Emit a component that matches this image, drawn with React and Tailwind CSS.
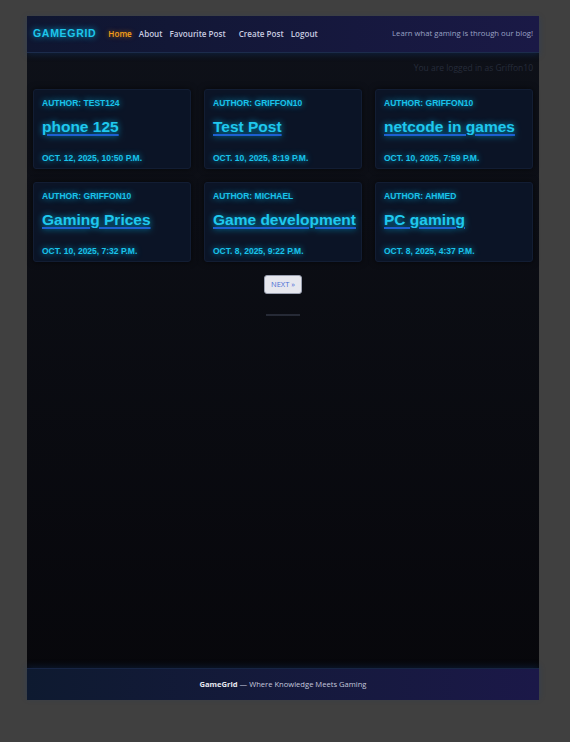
const posts = [
  { author: "test124", title: "phone 125", date: "Oct. 12, 2025, 10:50 p.m." },
  { author: "Griffon10", title: "Test Post", date: "Oct. 10, 2025, 8:19 p.m." },
  { author: "Griffon10", title: "netcode in games", date: "Oct. 10, 2025, 7:59 p.m." },
  { author: "Griffon10", title: "Gaming Prices", date: "Oct. 10, 2025, 7:32 p.m." },
  { author: "Michael", title: "Game development", date: "Oct. 8, 2025, 9:22 p.m." },
  { author: "Ahmed", title: "PC gaming", date: "Oct. 8, 2025, 4:37 p.m." },
];

const glow = "[text-shadow:0_0_6px_rgba(0,200,255,0.75)]";

const PostCard = ({ post }) => (
  <div className="h-[80px] rounded-[3px] border border-[#121d33] bg-[#0b1426] px-2 pt-[9px] shadow-[0_0_6px_rgba(0,0,0,0.6)]">
    <p className={`text-[8.5px] font-bold uppercase leading-none text-[#19c3ea] ${glow}`}>
      Author: {post.author}
    </p>
    <a
      href="#"
      className={`mt-[12px] block whitespace-nowrap text-[15.5px] font-bold leading-none text-[#1fc8ee] underline decoration-[#1d5fd0] decoration-2 underline-offset-[2px] ${glow}`}
    >
      {post.title}
    </a>
    <p className={`mt-[19px] text-[8.5px] font-bold uppercase leading-none text-[#19c3ea] ${glow}`}>
      {post.date}
    </p>
  </div>
);

export default function App() {
  return (
    <div className="min-h-[742px] bg-[#404040] pb-[42px] pl-[27px] pt-4 font-['Liberation_Sans',Arial,sans-serif]">
      <div className="flex h-[684px] w-[512px] flex-col bg-gradient-to-b from-[#0e1119] to-[#07070b]">
        {/* Header */}
        <header className="flex h-[37px] items-center border-b border-[#1c2c4c] bg-gradient-to-r from-[#0f1630] to-[#1a1946] px-[6px] shadow-[0_2px_6px_rgba(20,60,120,0.35)]">
          <span className="text-[10.5px] font-bold tracking-[0.7px] text-[#1ec6ea] [text-shadow:0_0_6px_rgba(0,200,255,0.8)]">
            GAMEGRID
          </span>
          <nav className="ml-[12px] flex items-center gap-[7px] font-['Open_Sans',sans-serif] text-[8.1px] font-semibold text-[#c8cce0]">
            <a href="#" className="text-[#f5a018] [text-shadow:0_0_5px_rgba(255,140,0,0.6)]">Home</a>
            <a href="#">About</a>
            <a href="#" className="mr-[6px]">Favourite Post</a>
            <a href="#">Create Post</a>
            <a href="#">Logout</a>
          </nav>
          <span className="ml-auto font-['Open_Sans',sans-serif] text-[7.7px] text-[#9aa2c4]">
            Learn what gaming is through our blog!
          </span>
        </header>

        <div className="flex justify-end px-[6px] pt-[9px] font-['Open_Sans',sans-serif] text-[8.5px] text-[#262c3a]">
          You are logged in as Griffon10
        </div>

        {/* Posts */}
        <main className="grid grid-cols-3 gap-x-[13px] gap-y-[13px] px-[6px] pt-[14px]">
          {posts.map((post, i) => (
            <PostCard key={i} post={post} />
          ))}
        </main>

        {/* Pagination */}
        <div className="mt-[13px] flex flex-col items-center">
          <button className="h-[19px] w-[38px] rounded-[3px] border border-[#9aa0b0] bg-[#e6e7ee] font-['Open_Sans',sans-serif] text-[7.5px] text-[#4a6fd6]">
            NEXT »
          </button>
          <div className="mt-[20px] h-[2px] w-[34px] bg-[#262a36]" />
        </div>

        {/* Footer */}
        <footer className="mt-auto flex h-[32px] items-center justify-center border-t border-[#172544] bg-gradient-to-r from-[#0e1a30] to-[#1b1848] font-['Open_Sans',sans-serif] text-[7.6px] text-[#c4c8dc] shadow-[0_-2px_6px_rgba(20,60,120,0.3)]">
          <span className="font-bold text-[#e6e8f0]">GameGrid</span>
          <span>&nbsp;— Where Knowledge Meets Gaming</span>
        </footer>
      </div>
    </div>
  );
}
